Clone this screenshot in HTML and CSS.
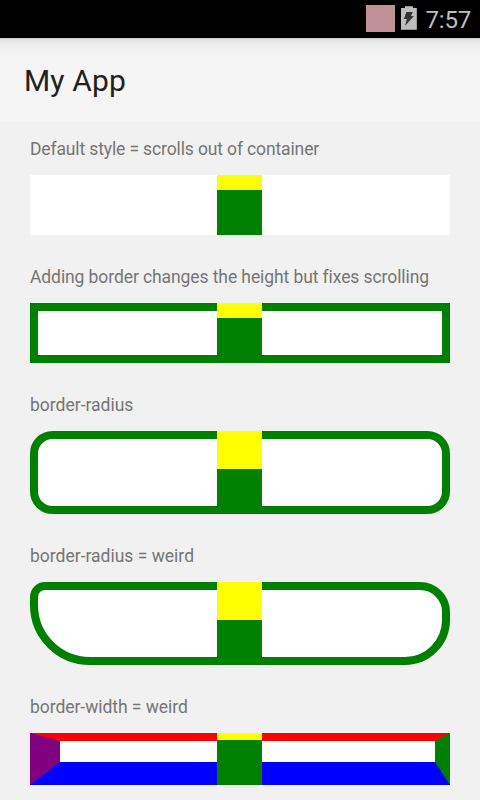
FILE: index.html
```html
<!DOCTYPE html>
<html lang="en">
<head>
<meta charset="utf-8">
<title>My App</title>
<link rel="stylesheet" href="styles.css">
</head>
<body>
<div class="status">
  <span class="notice"></span>
  <svg class="battery" width="16" height="24" viewBox="0 0 16 24"><path fill="#bebebe" d="M4 0h8v2h4v22H0V2h4z"/><path fill="#333" d="M5.5 6h6.5l-2 4h3L4 20l2-7H3z"/></svg>
  <span class="clock">7:57</span>
</div>
<header class="appbar"><h1>My App</h1></header>
<main>
  <section>
    <p><span class="tight">Default style = scrolls out of container</span></p>
    <div class="stage"><div class="box"></div><div class="strip"></div></div>
  </section>
  <section>
    <p><span class="snug">Adding border changes the height but fixes scrolling</span></p>
    <div class="stage"><div class="box bordered"></div><div class="strip"></div></div>
  </section>
  <section>
    <p><span>border-radius</span></p>
    <div class="stage tall"><div class="box bordered rounded"></div><div class="strip"></div></div>
  </section>
  <section>
    <p><span>border-radius = weird</span></p>
    <div class="stage tall"><div class="box bordered uneven"></div><div class="strip"></div></div>
  </section>
  <section>
    <p><span class="close">border-width = weird</span></p>
    <div class="stage short"><div class="box widths"></div><div class="strip"></div></div>
  </section>
</main>
</body>
</html>
```
FILE: styles.css
```css
* { box-sizing: border-box; }
body {
  margin: 0;
  height: 800px;
  overflow: hidden;
  background: #f1f1f1;
  font-family: Roboto, sans-serif;
}
.status {
  display: flex;
  height: 38px;
  padding: 5px 9px 0 366px;
  background: #000;
}
.notice { width: 29px; height: 27px; background: #c09097; }
.battery { margin: 1px 0 0 6px; }
.clock {
  margin-left: 9px;
  font-size: 24px;
  line-height: 31px;
  letter-spacing: -0.2px;
  color: #bebebe;
  font-weight: 400;
}
.appbar {
  height: 84px;
  padding: 1px 0 0 24px;
  background: linear-gradient(#c8c8c8 0, #e4e4e4 2px, #ececec 6px, #f2f2f2 13px, #f5f5f5 22px);
}
h1 {
  margin: 0;
  font-size: 30px;
  font-weight: 400;
  line-height: 84px;
  letter-spacing: 0.15px;
  color: #212121;
}
main { padding: 0 30px; }
p {
  margin: 0;
  height: 68px;
  padding-top: 32px;
  font-size: 17.5px;
  line-height: 21px;
  color: #757575;
  white-space: nowrap;
}
.tight { letter-spacing: -0.13px; }
.snug { letter-spacing: -0.09px; }
.close { letter-spacing: -0.05px; }
section:first-child p { height: 53px; padding-top: 17px; }
.stage {
  display: grid;
  height: 60px;
  --yellow: 15px;
}
.tall { height: 83px; --yellow: 38px; }
.short { height: 52px; --yellow: 7px; }
.box, .strip { grid-area: 1 / 1; }
.box { background: #fff; }
.strip {
  width: 45px;
  margin-left: 187px;
  z-index: 1;
  background: linear-gradient(#ff0 var(--yellow), #008000 var(--yellow));
}
.bordered { border: 8px solid #008000; }
.rounded { border-radius: 22.5px; }
.uneven { border-radius: 15px 30px 45px 60px; }
.widths {
  border-style: solid;
  border-width: 8px 15px 23px 30px;
  border-color: #f00 #008000 #00f #800080;
}
```
